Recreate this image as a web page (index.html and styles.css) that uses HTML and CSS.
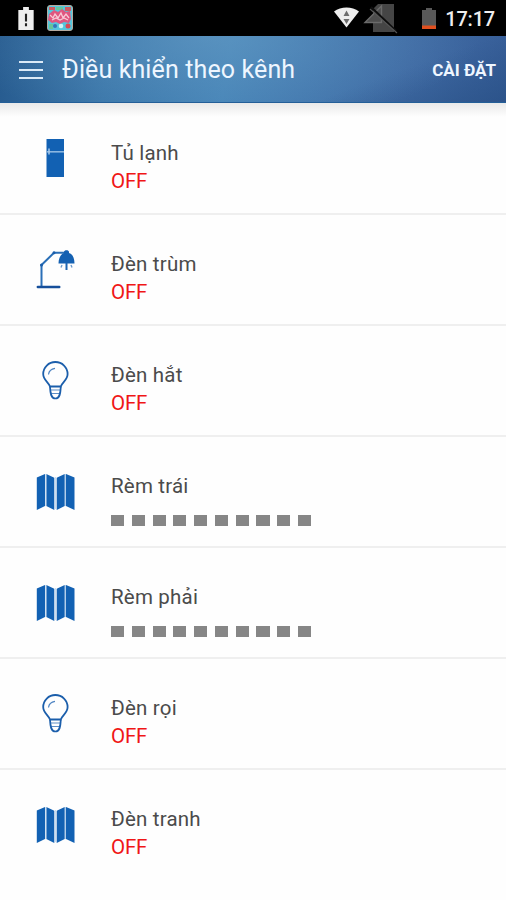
FILE: index.html
```html
<!DOCTYPE html>
<html lang="vi">
<head>
<meta charset="utf-8">
<title>Điều khiển theo kênh</title>
<link rel="stylesheet" href="styles.css">
</head>
<body>
<svg class="defs" aria-hidden="true">
  <symbol id="bulb" viewBox="0 0 40 40">
    <path d="M14 25.500C12.500 21 7.200 19 7.200 13a12.200 12 0 0 1 24.400 0C31.600 19 26.300 21 24.800 25.500z" fill="none" stroke="#1b5eab" stroke-width="1.800"/>
    <path d="M12.500 13.500c.4-3.400 3-5.700 6.500-6.200" fill="none" stroke="#4d83c2" stroke-width="1.200"/>
    <path d="M15 29h9M15.500 32.500h8" fill="none" stroke="#5c8dc6" stroke-width="1.200"/>
    <path d="M14 25.500c.3 7 1 12 5.400 12s5.100-5 5.400-12" fill="none" stroke="#1b5eab" stroke-width="1.700"/>
  </symbol>
  <symbol id="curtain" viewBox="0 0 40 40">
    <path d="M.8 5.500 9 2v32L.8 38zM10.300 2l8 3.800V38l-8-4zM20.700 5.800l8-3.800v32l-8 4zM30 2l8.500 3.500V38L30 34z" fill="#1261b3"/>
    <path d="M10 2v32M29.400 2v32" stroke="#9fc2e5" stroke-width=".9"/>
    <path d="M19.500 5v32" stroke="#bed5ee" stroke-width=".8"/>
  </symbol>
</svg>
<div class="statusbar">
  <svg class="alert" viewBox="0 0 16 24"><path d="M5 0h6v3h5v21H0V3h5z" fill="#eee"/><path d="M8 7v8M8 17v3" stroke="#222" stroke-width="2.200"/></svg>
  <svg class="game" viewBox="0 0 26 26">
    <rect x=".5" y=".5" width="25" height="25" rx="2.500" fill="#55c6dc" stroke="#b5aaa0"/>
    <path d="M2 2h6v3H2zM18 2h6v4h-6z" fill="#cf5a62"/><path d="M9 2h7v3H9zM2 19h4v5H2z" fill="#66c599"/>
    <path d="M2 9l5-4 4 2 4-3 4 3 4-1 1 8-2 4-5-1-4 2-4-2-4 1-4-3z" fill="#e0567f"/>
    <path d="M3 10l3 3 2-4 3 4 3-5 2 5 3-4 3 4M5 15l4-2 4 2 4-2 4 2" fill="none" stroke="#f8cad6" stroke-width="1.300"/>
    <circle cx="8" cy="21" r="2" fill="#3575ba"/><circle cx="14" cy="21" r="2.300" fill="#d1f3f4"/><circle cx="21" cy="21" r="2.500" fill="#d94a55"/>
  </svg>
  <svg class="signals" viewBox="0 0 72 32">
    <path d="M1 7.500C8 2 19 2 26 7.500L13.500 23.500z" fill="#eee"/>
    <path d="M13.500 6.500l3 5.500h-6zM13.500 20l-3-5h6z" fill="#6d6d6d"/>
    <path d="M40 5l5-5h16v28H40z" fill="#454545"/>
    <path d="M32 18.500L48.500 2v16.500z" fill="#4d4d4d" stroke="#6a6a6a" stroke-width="1.400"/>
    <path d="M38 3l25 24" stroke="#0d0d0d" stroke-width="2.200"/><path d="M37 5l27 24" stroke="#555" stroke-width="1.200"/>
  </svg>
  <svg class="battery" viewBox="0 0 14 21"><path d="M4 0h6v2h4v19H0V2h4z" fill="#595959"/><path d="M0 17.500h14V21H0z" fill="#e0501f"/></svg>
  <span class="clock">17:17</span>
</div>
<header class="appbar">
  <svg class="menu" viewBox="0 0 24 20"><path d="M0 2h24M0 10h24M0 18h24" stroke="#dbeaf7" stroke-width="2.200"/></svg>
  <h1>Điều khiển theo kênh</h1>
  <span class="settings">CÀI ĐẶT</span>
</header>
<main class="list">
  <div class="row">
    <svg class="icon" viewBox="0 0 40 40"><path d="M10.500 0H28v38H10.500z" fill="#1261b3"/><path d="M11 12.800h17" stroke="#8bb6e0" stroke-width="1.600"/><path d="M13 9.500v6" stroke="#a9c9e9" stroke-width="1.500"/></svg>
    <div class="info"><div class="name">Tủ lạnh</div><div class="state">OFF</div></div>
  </div>
  <div class="row">
    <svg class="icon" viewBox="0 0 40 40"><path d="M5.500 37V15L18 2.800h13" fill="none" stroke="#2a6fb7" stroke-width="2"/><path d="M1.800 37h21.500" stroke="#164f9b" stroke-width="2.400" stroke-linecap="round"/><circle cx="5.500" cy="15" r="1.500" fill="#1b5eab"/><circle cx="18" cy="2.800" r="1.500" fill="#1b5eab"/><path d="M28 2c0-2.500 5-2.500 5 0v1c3.500 1 5.500 5 5.500 10.500H22.500C22.500 8 25 4 28 3z" fill="#1561b2"/><path d="M30.500 13v7" stroke="#1f66b3" stroke-width="2"/><path d="M26 15l-1 2.500M35 15l1 2.500" stroke="#6d9bcd" stroke-width="1.400"/></svg>
    <div class="info"><div class="name">Đèn trùm</div><div class="state">OFF</div></div>
  </div>
  <div class="row">
    <svg class="icon"><use href="#bulb"/></svg>
    <div class="info"><div class="name">Đèn hắt</div><div class="state">OFF</div></div>
  </div>
  <div class="row">
    <svg class="icon"><use href="#curtain"/></svg>
    <div class="info"><div class="name">Rèm trái</div><div class="level"><i></i><i></i><i></i><i></i><i></i><i></i><i></i><i></i><i></i><i></i></div></div>
  </div>
  <div class="row">
    <svg class="icon"><use href="#curtain"/></svg>
    <div class="info"><div class="name">Rèm phải</div><div class="level"><i></i><i></i><i></i><i></i><i></i><i></i><i></i><i></i><i></i><i></i></div></div>
  </div>
  <div class="row">
    <svg class="icon"><use href="#bulb"/></svg>
    <div class="info"><div class="name">Đèn rọi</div><div class="state">OFF</div></div>
  </div>
  <div class="row">
    <svg class="icon"><use href="#curtain"/></svg>
    <div class="info"><div class="name">Đèn tranh</div><div class="state">OFF</div></div>
  </div>
</main>
</body>
</html>
```
FILE: styles.css
```css
* { box-sizing: border-box; }
body { margin: 0; height: 900px; overflow: hidden; background: #fefefe; font-family: Roboto, sans-serif; }
svg { display: block; flex: none; }
.defs { display: none; }
.statusbar { display: flex; align-items: flex-start; height: 36px; background: #000; }
.alert { width: 16px; height: 23px; margin: 7px 0 0 18px; }
.game { width: 26px; height: 26px; margin: 5px 0 0 13px; }
.signals { width: 72px; height: 32px; margin: 4px 0 0 auto; }
.battery { width: 14px; height: 21px; margin: 8px 0 0 17px; }
.clock { width: 50px; margin: 7px 11px 0 9px; color: #eee; font-size: 20px; line-height: 24px; font-weight: 500; letter-spacing: -0.2px; white-space: nowrap; text-align: right; }
.appbar { display: flex; align-items: center; height: 67px; padding: 2px 10px 0 19px; color: #eef6ff; background: radial-gradient(ellipse 270px 90px at 210px 0, #6ba0c880, transparent), linear-gradient(160deg, transparent 72%, #20487c80 100%), linear-gradient(100deg, #265a8e 0%, #3a76a9 22%, #4684b7 45%, #4379af 60%, #3f6aa3 80%, #375e98 100%); border-bottom: 1px solid #245f98; }
.menu { width: 24px; height: 20px; }
h1 { margin: 0 0 0 19px; font-size: 25px; line-height: 32px; font-weight: 400; letter-spacing: 0.12px; white-space: nowrap; }
.settings { margin-left: auto; font-size: 17px; font-weight: 700; white-space: nowrap; }
.list { background: linear-gradient(#e9e9e9, #fefefe 14px); }
.row { display: flex; height: 111px; padding: 35px 0 0 36px; border-top: 2px solid #efefef; }
.row:first-child { height: 110px; padding-top: 34px; border-top-color: transparent; }
.icon { width: 40px; height: 40px; }
.info { margin-left: 35px; font-size: 20.5px; line-height: 28px; }
.name { color: #4b4b4b; letter-spacing: 0.2px; white-space: nowrap; }
.state { color: #f01616; letter-spacing: -0.2px; }
.level { display: flex; gap: 7.7px; padding-top: 15px; }
.level i { width: 13.1px; height: 11px; background: #868686; }
```
